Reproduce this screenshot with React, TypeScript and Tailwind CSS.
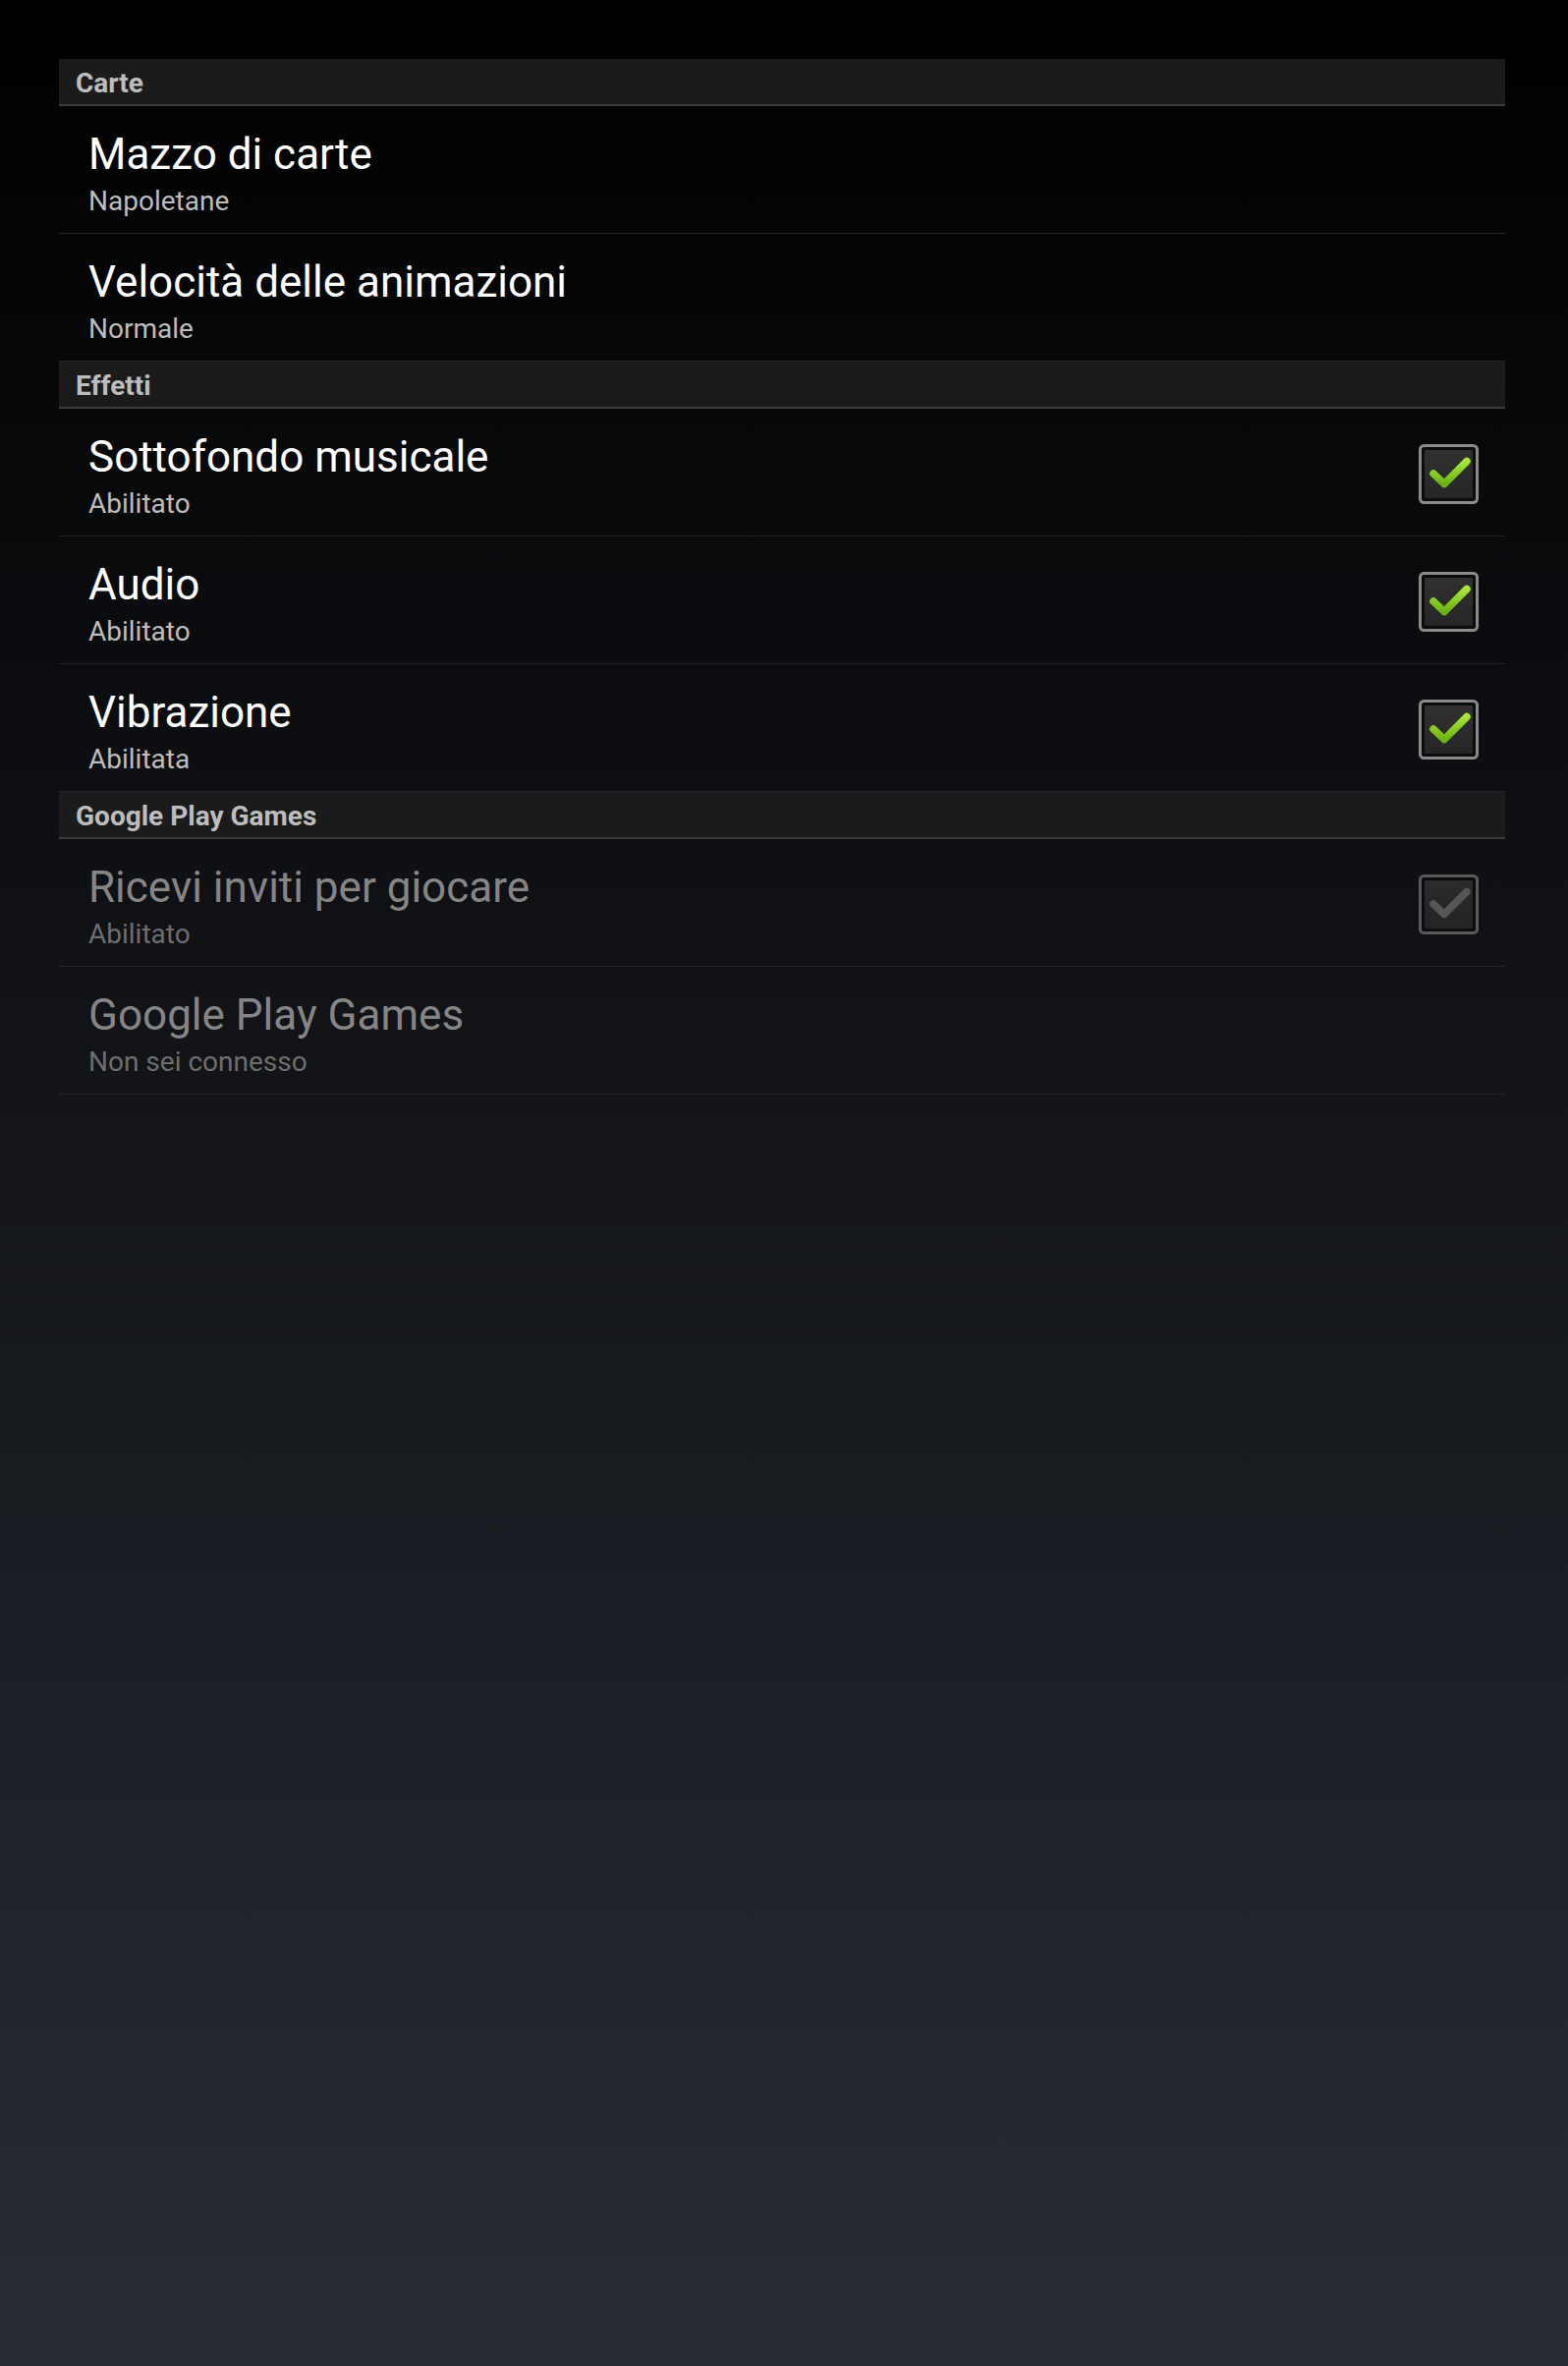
import React from "react";

type Item = {
  title: string;
  summary: string;
  check?: boolean;
  disabled?: boolean;
};

type Section = { header: string; items: Item[] };

const sections: Section[] = [
  {
    header: "Carte",
    items: [
      { title: "Mazzo di carte", summary: "Napoletane" },
      { title: "Velocità delle animazioni", summary: "Normale" },
    ],
  },
  {
    header: "Effetti",
    items: [
      { title: "Sottofondo musicale", summary: "Abilitato", check: true },
      { title: "Audio", summary: "Abilitato", check: true },
      { title: "Vibrazione", summary: "Abilitata", check: true },
    ],
  },
  {
    header: "Google Play Games",
    items: [
      { title: "Ricevi inviti per giocare", summary: "Abilitato", check: true, disabled: true },
      { title: "Google Play Games", summary: "Non sei connesso", disabled: true },
    ],
  },
];

function CheckBox({ disabled }: { disabled?: boolean }) {
  const id = disabled ? "chk-d" : "chk-e";
  return (
    <svg width="61" height="61" viewBox="0 0 61 61">
      <defs>
        <linearGradient id={id + "-g"} x1="0" y1="0" x2="0" y2="1">
          <stop offset="0" stopColor="#a6e83a" />
          <stop offset="1" stopColor="#6cb312" />
        </linearGradient>
        <linearGradient id={id + "-f"} x1="0" y1="0" x2="0" y2="1">
          <stop offset="0" stopColor={disabled ? "#2a2b2d" : "#313131"} />
          <stop offset="1" stopColor={disabled ? "#222325" : "#262626"} />
        </linearGradient>
      </defs>
      <rect
        x="1.5"
        y="1.5"
        width="58"
        height="58"
        rx="4"
        fill="#0c0c0c"
        stroke={disabled ? "#58595b" : "#8a8a8a"}
        strokeWidth="3"
      />
      <rect x="6" y="6" width="49" height="49" rx="1" fill={`url(#${id}-f)`} />
      <path
        d="M15 30 L26 40.5 L49 17.5"
        fill="none"
        stroke={disabled ? "#555658" : `url(#${id}-g)`}
        strokeWidth="7.5"
        strokeLinecap="round"
        strokeLinejoin="round"
      />
    </svg>
  );
}

export default function App() {
  return (
    <div
      className="min-h-[2408px] w-full bg-[linear-gradient(to_bottom,#000000,#282c35)] pt-[60px]"
      style={{ fontFamily: "Roboto, 'Noto Sans', 'Liberation Sans', sans-serif" }}
    >
      <div className="ml-[60px] w-[1472px]">
        {sections.map((s) => (
          <div key={s.header}>
            <div className="h-[48px] bg-[#1b1b1b] border-b-2 border-[#3c3c3c] pl-[17px] pt-[11px]">
              <span className="text-[28px] leading-[28px] font-bold text-[#bdbdbd]">
                {s.header}
              </span>
            </div>
            {s.items.map((it) => (
              <div
                key={it.title}
                className="h-[130px] border-b border-[#242424] flex"
              >
                <div className="pl-[30px] pt-[23px] flex flex-col">
                  <div
                    className={
                      "text-[44px] leading-[52px] " +
                      (it.disabled ? "text-[#858585]" : "text-white")
                    }
                  >
                    {it.title}
                  </div>
                  <div
                    className={
                      "mt-[4px] text-[28px] leading-[36px] " +
                      (it.disabled ? "text-[#6e6e6e]" : "text-[#bdbdbd]")
                    }
                  >
                    {it.summary}
                  </div>
                </div>
                {it.check && (
                  <div className="ml-auto mr-[27px] mt-[3px] self-center flex">
                    <CheckBox disabled={it.disabled} />
                  </div>
                )}
              </div>
            ))}
          </div>
        ))}
      </div>
    </div>
  );
}
